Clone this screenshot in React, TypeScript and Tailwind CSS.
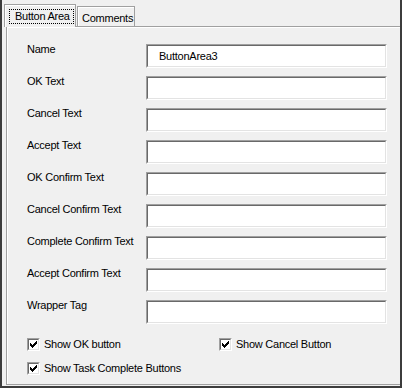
const fields = [
    { label: "Name", value: "ButtonArea3" },
    { label: "OK Text" },
    { label: "Cancel Text" },
    { label: "Accept Text" },
    { label: "OK Confirm Text" },
    { label: "Cancel Confirm Text" },
    { label: "Complete Confirm Text" },
    { label: "Accept Confirm Text" },
    { label: "Wrapper Tag" },
]

// classic 7x7 check glyph, one rect per column
const checkCols = [
    [1, 3], [2, 4], [3, 5], [4, 4], [5, 3], [6, 2], [7, 1],
]

const TextBox = ({ value }: { value?: string }) => {
    return (
        <div className="h-[24px] w-[241px] border border-t-[#a0a0a0] border-l-[#a0a0a0] border-b-white border-r-white">
            <div className="flex h-full items-center border border-t-[#696969] border-l-[#696969] border-b-[#e3e3e3] border-r-[#e3e3e3] bg-white pl-[11px] leading-[13px]">
                {value}
            </div>
        </div>
    )
}

const CheckBox = ({ label }: { label: string }) => {
    return (
        <div className="flex h-[13px] items-center">
            <div className="h-[13px] w-[13px] border border-t-[#a0a0a0] border-l-[#a0a0a0] border-b-white border-r-white">
                <div className="h-full w-full border border-t-[#696969] border-l-[#696969] border-b-[#e3e3e3] border-r-[#e3e3e3] bg-white">
                    <svg width="9" height="9" viewBox="0 0 9 9" className="block" shapeRendering="crispEdges">
                        {checkCols.map(([x, y]) => (
                            <rect key={x} x={x} y={y} width="1" height="3" fill="#000" />
                        ))}
                    </svg>
                </div>
            </div>
            <span className="ml-[4px] leading-[13px]">{label}</span>
        </div>
    )
}

const App = () => {
    return (
        <div className="h-[388px] w-[402px] border-b-2 border-l-2 border-r-2 border-[#3c3c3c] bg-[#f0f0f0] font-['Liberation_Sans',Arial,sans-serif] text-[11px] tracking-[-0.25px] text-black">
            <div className="flex h-[26px] items-end pl-[2px]">
                <div className="relative z-10 -mb-px h-[23px] w-[72px] border-l border-r border-t border-[#a0a0a0] bg-[#f0f0f0] pl-[4px] pt-[4px] shadow-[inset_1px_1px_0_#fff]">
                    <div className="h-[15px] w-[65px] whitespace-nowrap border border-dotted border-black pl-[5px] leading-[13px]">
                        Button Area
                    </div>
                </div>
                <div className="ml-[1px] h-[20px] w-[58px] whitespace-nowrap border-l border-r border-t border-[#a0a0a0] pl-[4px] pt-[5px] leading-[13px] shadow-[inset_1px_1px_0_#fff]">
                    Comments
                </div>
            </div>

            <div className="ml-[4px] h-[359px] border-b border-l border-t border-[#a0a0a0] pl-[20px] pt-[17px] shadow-[inset_1px_1px_0_#fff]">
                <div className="flex flex-col gap-[8px]">
                    {fields.map((f) => (
                        <div key={f.label} className="flex h-[24px] items-start">
                            <span className="-mt-px w-[119px] leading-[13px]">{f.label}</span>
                            <TextBox value={f.value} />
                        </div>
                    ))}
                </div>

                <div className="mt-[14px] flex flex-col gap-[11px]">
                    <div className="flex">
                        <div className="w-[192px]">
                            <CheckBox label="Show OK button" />
                        </div>
                        <CheckBox label="Show Cancel Button" />
                    </div>
                    <CheckBox label="Show Task Complete Buttons" />
                </div>
            </div>
        </div>
    )
}

export default App
